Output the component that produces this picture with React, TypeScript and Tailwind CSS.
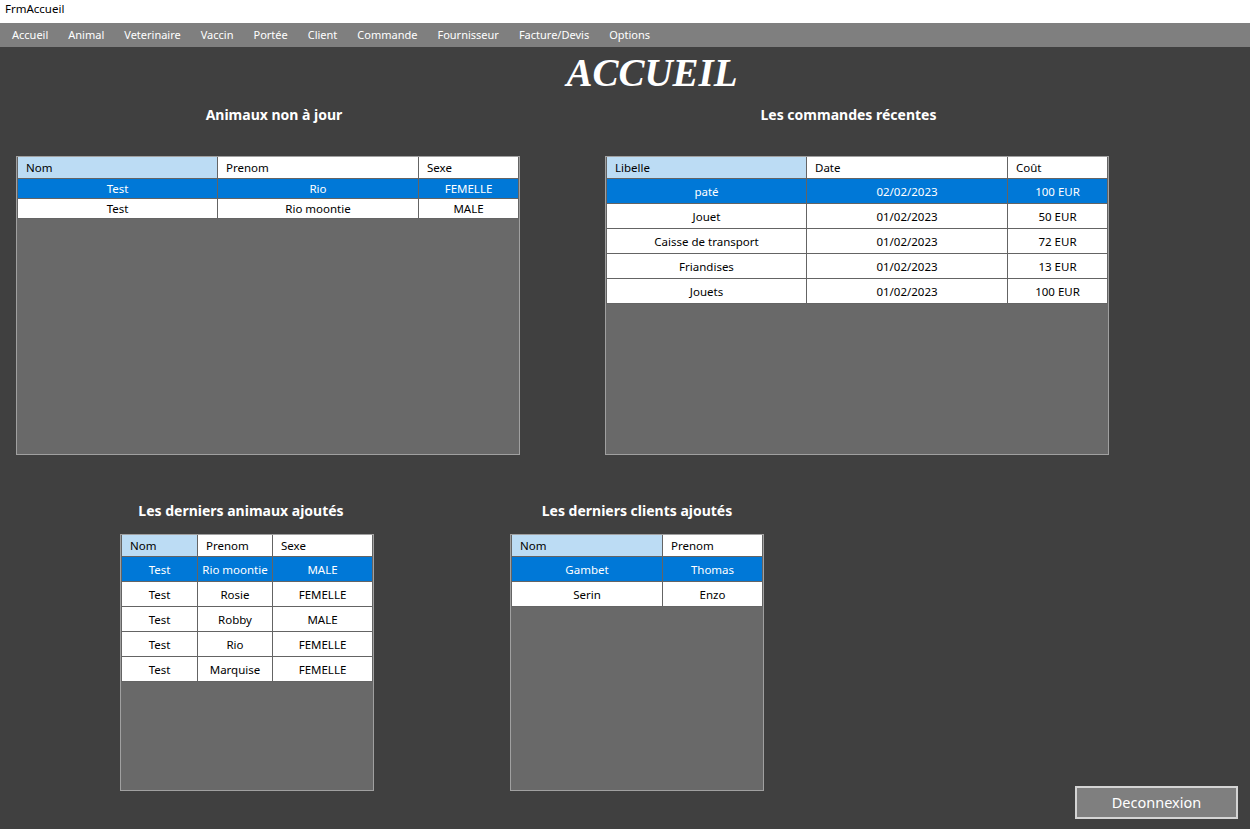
import React from 'react';

const menu = ['Accueil', 'Animal', 'Veterinaire', 'Vaccin', 'Portée', 'Client', 'Commande', 'Fournisseur', 'Facture/Devis', 'Options'];

interface GridProps {
  cols: { label: string; w: string }[];
  rows: string[][];
  rowH: string;
  width: string;
  height: string;
}

function DataGrid({ cols, rows, rowH, width, height }: GridProps) {
  return (
    <div className={`${width} ${height} border border-[#a0a0a0] bg-[#696969] text-[11.5px] text-black`}>
      <div className="flex h-[22px] border-b border-l border-[#646464]">
        {cols.map((c, i) => (
          <div
            key={c.label}
            className={`${c.w} flex items-center pl-[8px] pt-[1px] border-r border-[#646464] ${i === 0 ? 'bg-[#bcdcf4]' : 'bg-white'}`}
          >
            {c.label}
          </div>
        ))}
      </div>
      {rows.map((r, ri) => (
        <div key={ri} className={`flex ${rowH} border-b border-l border-[#646464]`}>
          {r.map((v, ci) => (
            <div
              key={ci}
              className={`${cols[ci].w} flex items-center justify-center pt-[1px] border-r border-[#646464] ${
                ri === 0 ? 'bg-[#0078d7] text-white' : 'bg-white text-black'
              }`}
            >
              {v}
            </div>
          ))}
        </div>
      ))}
    </div>
  );
}

function Heading({ children, shift }: { children: React.ReactNode; shift: string }) {
  return (
    <div className={`h-[29px] flex items-center justify-center text-[14px] font-bold text-white ${shift}`}>
      {children}
    </div>
  );
}

export default function App() {
  return (
    <div className="w-[1250px] h-[829px] flex flex-col bg-[#404040] overflow-hidden" style={{ fontFamily: '"Noto Sans", "Open Sans", sans-serif' }}>
      <div className="h-[23px] bg-white text-[11.5px] text-black pl-[5px] leading-[17px]">FrmAccueil</div>
      <div className="h-[24px] bg-[#7f7f7f] flex items-center gap-[20px] pl-[12px] text-[11px] text-white">
        {menu.map(m => (
          <span key={m}>{m}</span>
        ))}
      </div>

      <div className="h-[53px] flex items-center justify-center pl-[54px]">
        <span className="text-[39px] font-bold italic text-white" style={{ fontFamily: '"Liberation Serif", "DejaVu Serif", serif' }}>
          ACCUEIL
        </span>
      </div>

      <div className="flex">
        <div className="ml-[16px] w-[504px]">
          <Heading shift="pl-[12px]">Animaux non à jour</Heading>
          <div className="mt-[27px]">
            <DataGrid
              width="w-[504px]"
              height="h-[299px]"
              rowH="h-[20px]"
              cols={[
                { label: 'Nom', w: 'w-[200px]' },
                { label: 'Prenom', w: 'w-[201px]' },
                { label: 'Sexe', w: 'w-[100px]' },
              ]}
              rows={[
                ['Test', 'Rio', 'FEMELLE'],
                ['Test', 'Rio moontie', 'MALE'],
              ]}
            />
          </div>
        </div>
        <div className="ml-[85px] w-[504px]">
          <Heading shift="pr-[17px]">Les commandes récentes</Heading>
          <div className="mt-[27px]">
            <DataGrid
              width="w-[504px]"
              height="h-[299px]"
              rowH="h-[25px]"
              cols={[
                { label: 'Libelle', w: 'w-[200px]' },
                { label: 'Date', w: 'w-[201px]' },
                { label: 'Coût', w: 'w-[100px]' },
              ]}
              rows={[
                ['paté', '02/02/2023', '100 EUR'],
                ['Jouet', '01/02/2023', '50 EUR'],
                ['Caisse de transport', '01/02/2023', '72 EUR'],
                ['Friandises', '01/02/2023', '13 EUR'],
                ['Jouets', '01/02/2023', '100 EUR'],
              ]}
            />
          </div>
        </div>
      </div>

      <div className="flex items-start mt-[41px]">
        <div className="ml-[120px] w-[254px]">
          <Heading shift="pr-[12px]">Les derniers animaux ajoutés</Heading>
          <div className="mt-[9px]">
            <DataGrid
              width="w-[254px]"
              height="h-[257px]"
              rowH="h-[25px]"
              cols={[
                { label: 'Nom', w: 'w-[76px]' },
                { label: 'Prenom', w: 'w-[75px]' },
                { label: 'Sexe', w: 'w-[100px]' },
              ]}
              rows={[
                ['Test', 'Rio moontie', 'MALE'],
                ['Test', 'Rosie', 'FEMELLE'],
                ['Test', 'Robby', 'MALE'],
                ['Test', 'Rio', 'FEMELLE'],
                ['Test', 'Marquise', 'FEMELLE'],
              ]}
            />
          </div>
        </div>
        <div className="ml-[136px] w-[254px]">
          <Heading shift="">Les derniers clients ajoutés</Heading>
          <div className="mt-[9px]">
            <DataGrid
              width="w-[254px]"
              height="h-[257px]"
              rowH="h-[25px]"
              cols={[
                { label: 'Nom', w: 'w-[151px]' },
                { label: 'Prenom', w: 'w-[100px]' },
              ]}
              rows={[
                ['Gambet', 'Thomas'],
                ['Serin', 'Enzo'],
              ]}
            />
          </div>
        </div>
        <button
          type="button"
          className="ml-auto mr-[12px] mt-[290px] w-[163px] h-[33px] border-2 border-[#d4d4d4] bg-[#7f7f7f] text-white text-[14.5px] flex items-center justify-center"
        >
          Deconnexion
        </button>
      </div>
    </div>
  );
}
